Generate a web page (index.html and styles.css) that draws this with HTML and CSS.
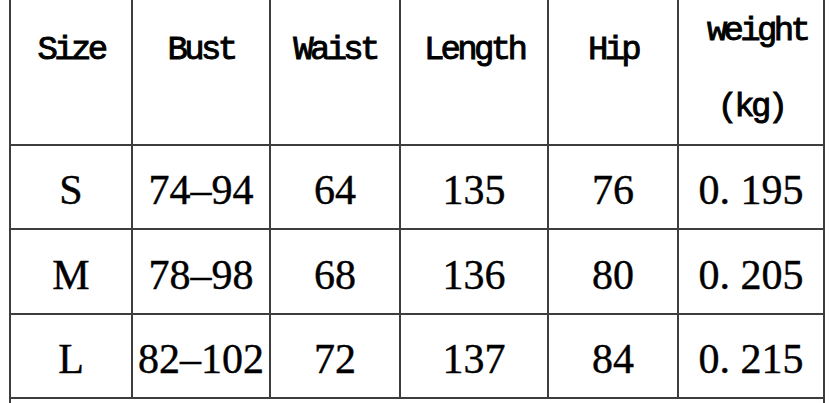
FILE: index.html
```html
<!DOCTYPE html>
<html lang="en">
<head>
<meta charset="utf-8">
<title>Size chart</title>
<link rel="stylesheet" href="styles.css">
</head>
<body>
<table class="chart">
  <colgroup>
    <col class="c1"><col class="c2"><col class="c3"><col class="c4"><col class="c5"><col class="c6">
  </colgroup>
  <thead>
    <tr class="head">
      <th>Size</th>
      <th>Bust</th>
      <th>Waist</th>
      <th>Length</th>
      <th>Hip</th>
      <th class="weight"><span class="w1">weight</span><span class="w2">(kg)</span></th>
    </tr>
  </thead>
  <tbody>
    <tr class="row">
      <td>S</td><td>74–94</td><td>64</td><td>135</td><td>76</td><td>0. 195</td>
    </tr>
    <tr class="row mid">
      <td>M</td><td>78–98</td><td>68</td><td>136</td><td>80</td><td>0. 205</td>
    </tr>
    <tr class="row">
      <td>L</td><td>82–102</td><td>72</td><td>137</td><td>84</td><td>0. 215</td>
    </tr>
    <tr class="tail">
      <td colspan="6"></td>
    </tr>
  </tbody>
</table>
</body>
</html>
```
FILE: styles.css
```css
html, body {
  margin: 0;
  padding: 0;
  background: #ffffff;
  overflow: hidden;
}

.chart {
  border-collapse: collapse;
  table-layout: fixed;
  width: 816px;
  margin-left: 9px;
  color: #000;
}

.c1 { width: 122px; }
.c2 { width: 138px; }
.c3 { width: 130px; }
.c4 { width: 148px; }
.c5 { width: 130px; }
.c6 { width: 146px; }

.chart th,
.chart td {
  border: 2px solid #3d3d3d;
  padding: 0;
  text-align: center;
}

.head th {
  border-top: none;
  height: 145px;
  vertical-align: top;
  font-family: "Liberation Mono", "DejaVu Sans Mono", monospace;
  font-size: 34px;
  font-weight: normal;
  letter-spacing: -3.7px;
  line-height: 40px;
  padding-top: 30px;
  box-sizing: border-box;
  color: #000;
  -webkit-text-stroke: 0.9px #000;
}

.head th.weight {
  padding-top: 11px;
}

.w1 {
  display: block;
  padding-left: 12px;
}

.w2 {
  display: block;
  margin-top: 36px;
}

.row td {
  height: 84px;
  vertical-align: middle;
  font-family: "Liberation Serif", "Times New Roman", serif;
  font-size: 42px;
  line-height: 46px;
  padding-top: 6px;
  box-sizing: border-box;
  -webkit-text-stroke: 0.4px #000;
}

.row.mid td {
  height: 85px;
}

.tail td {
  height: 6px;
  border-bottom: none;
}
```
